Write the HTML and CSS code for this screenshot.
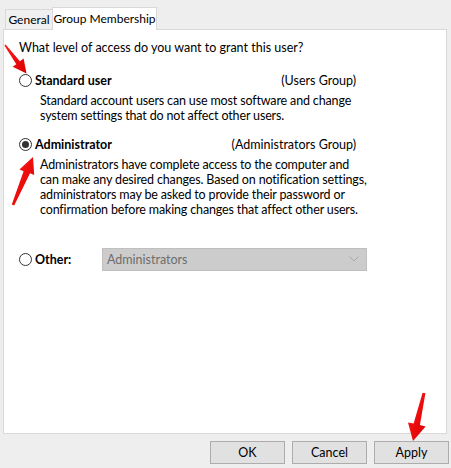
FILE: index.html
```html
<!DOCTYPE html>
<html>
<head>
<meta charset="utf-8">
<link rel="stylesheet" href="styles.css">
</head>
<body>
<div class="dialog">
  <div class="tabs">
    <div class="tab tab-general">General</div>
    <div class="tab tab-active">Group Membership</div>
  </div>
  <div class="panel">
    <p class="question">What level of access do you want to grant this user?</p>

    <div class="option option-standard">
      <div class="option-head">
        <span class="radio"></span>
        <span class="label">Standard user</span>
        <span class="group">(Users Group)</span>
      </div>
      <p class="desc">Standard account users can use most software and change<br>system settings that do not affect other users.</p>
    </div>

    <div class="option option-admin">
      <div class="option-head">
        <span class="radio checked"></span>
        <span class="label">Administrator</span>
        <span class="group">(Administrators Group)</span>
      </div>
      <p class="desc">Administrators have complete access to the computer and<br>can make any desired changes. Based on notification settings,<br>administrators may be asked to provide their password or<br>confirmation before making changes that affect other users.</p>
    </div>

    <div class="other-row">
      <span class="radio"></span>
      <span class="label other-label">Other:</span>
      <div class="dropdown">
        <span>Administrators</span>
        <svg class="chevron" width="10" height="6" viewBox="0 0 10 6"><polyline points="0.5,0.5 5,5 9.5,0.5" fill="none" stroke="#a8a8a8" stroke-width="1"/></svg>
      </div>
    </div>
  </div>
  <div class="buttons">
    <button class="btn">OK</button>
    <button class="btn">Cancel</button>
    <button class="btn">Apply</button>
  </div>
</div>
<svg class="arrows" width="451" height="468" viewBox="0 0 451 468">
  <defs>
    <linearGradient id="red" x1="0" y1="0" x2="1" y2="1">
      <stop offset="0" stop-color="#ff1a1a"/>
      <stop offset="1" stop-color="#d90000"/>
    </linearGradient>
  </defs>
  <polygon fill="url(#red)" points="5.6,44.5 4.4,45.5 16.3,64.3 12.6,66.8 26.5,73.5 23.6,58.4 19.9,61.3"/>
  <polygon fill="url(#red)" points="14.2,205.6 11.8,204.4 23.6,171.3 19.4,169.5 33,157 34.2,175.0 30.0,173.3"/>
  <polygon fill="url(#red)" points="425.4,393.2 422.6,392.8 413.6,423.6 408.0,422.4 413,441 425.6,426.4 419.9,425.1"/>
</svg>
</body>
</html>
```

FILE: styles.css
```css
html, body {
  margin: 0;
  padding: 0;
}
body {
  width: 451px;
  height: 468px;
  overflow: hidden;
  background: #eeeeee;
  font-family: Lato, "Noto Sans", sans-serif;
  font-size: 12.5px;
  color: #000;
  position: relative;
}
.dialog {
  padding: 7px 0 0 3px;
}
.tabs {
  display: flex;
  align-items: flex-end;
  height: 22px;
  margin-left: 2px;
}
.tab {
  box-sizing: border-box;
  height: 20px;
  line-height: 19px;
  text-align: center;
  border: 1px solid #d9d9d9;
  border-bottom: none;
  background: #f0f0f0;
  white-space: nowrap;
  font-size: 12px;
}
.tab-general {
  width: 48px;
}
.tab-active {
  width: 105px;
  height: 23px;
  line-height: 21px;
  margin-left: -1px;
  margin-bottom: -1px;
  background: #ffffff;
  position: relative;
  z-index: 1;
}
.panel {
  box-sizing: border-box;
  width: 444px;
  height: 405px;
  border: 1px solid #d9d9d9;
  background: #ffffff;
  padding: 10px 0 0 15px;
}
.question {
  margin: 0;
  line-height: 15px;
}
.option-standard {
  margin-top: 18px;
}
.option-admin {
  margin-top: 13px;
}
.option-head {
  display: flex;
  align-items: center;
  width: 337px;
  height: 15px;
}
.radio {
  box-sizing: border-box;
  width: 13px;
  height: 13px;
  border: 1px solid #333333;
  border-radius: 50%;
  background: #ffffff;
  display: flex;
  align-items: center;
  justify-content: center;
  flex: none;
}
.radio.checked::after {
  content: "";
  width: 7px;
  height: 7px;
  border-radius: 50%;
  background: #333333;
}
.label {
  font-weight: bold;
  margin-left: 3px;
}
.group {
  margin-left: auto;
}
.desc {
  margin: 5px 0 0 21px;
  line-height: 15.3px;
  letter-spacing: -0.15px;
}
.other-row {
  display: flex;
  align-items: center;
  margin-top: 30px;
  height: 23px;
}
.other-label {
  width: 67px;
}
.dropdown {
  box-sizing: border-box;
  width: 265px;
  height: 23px;
  border: 1px solid #bfbfbf;
  background: #cccccc;
  color: #6d6d6d;
  display: flex;
  align-items: center;
  padding: 0 4px 0 4px;
}
.chevron {
  margin-left: auto;
  margin-right: 3px;
}
.buttons {
  display: flex;
  justify-content: flex-end;
  gap: 7px;
  margin-top: 7px;
  padding-right: 2px;
}
.btn {
  box-sizing: border-box;
  width: 75px;
  height: 23px;
  border: 1px solid #adadad;
  background: #e1e1e1;
  font-family: inherit;
  font-size: 12.5px;
  color: #000;
  padding: 0;
}
.arrows {
  position: absolute;
  left: 0;
  top: 0;
  pointer-events: none;
}
```
